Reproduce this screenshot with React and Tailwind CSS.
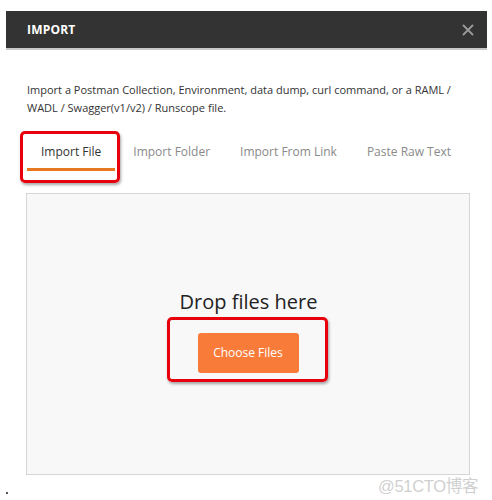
import React from "react";

export default function App() {
  const font = { fontFamily: '"Open Sans", "Noto Sans", sans-serif' };
  return (
    <div className="relative w-[492px] h-[500px] bg-white overflow-hidden" style={font}>
      <div className="ml-[6px] pt-[11px] w-[481px]">
        <div className="h-[39px] bg-[#333333] flex items-center justify-between pl-[21px] pr-[12px] border-b-[2px] border-[#c8c8c8]">
          <span className="text-white font-bold text-[12px] tracking-[0.2px]">IMPORT</span>
          <svg width="14" height="14" viewBox="0 0 14 14" className="text-[#9a9a9a]">
            <path d="M2 2 L12 12 M12 2 L2 12" stroke="currentColor" strokeWidth="1.8" />
          </svg>
        </div>
        <div className="pl-[21px] pr-[10px]">
          <p className="mt-[31px] text-[11px] leading-[18px] text-[#333]">
            Import a Postman Collection, Environment, data dump, curl command, or a RAML / WADL / Swagger(v1/v2) / Runscope file.
          </p>
          <div className="mt-[21px] flex items-end text-[12px] h-[33px]">
            <div className="relative">
              <div className="px-[14px] h-[33px] flex items-center text-[#333] border-b-[3px] border-[#e87722] pb-[2px]">Import File</div>
              <div className="absolute left-[-7px] right-[-5px] top-[-7px] bottom-[-12px] border-[3px] border-[#e8000d] rounded-[5px] shadow-[1px_2px_3px_rgba(0,0,0,0.35)]"></div>
            </div>
            <div className="ml-[18px] h-[33px] flex items-center text-[#8a8a8a] pb-[5px]">Import Folder</div>
            <div className="ml-[30px] h-[33px] flex items-center text-[#8a8a8a] pb-[5px]">Import From Link</div>
            <div className="ml-[30px] h-[33px] flex items-center text-[#8a8a8a] pb-[5px]">Paste Raw Text</div>
          </div>
          <div className="mt-[22px] ml-[-1px] w-[444px] h-[282px] bg-[#f8f8f9] border border-[#d6d6d6] flex flex-col items-center pt-[94px]">
            <div className="text-[20px] leading-[28px] text-[#222] pl-[1px]">Drop files here</div>
            <div className="relative mt-[17px]">
              <div className="w-[101px] h-[40px] bg-[#f97b3a] rounded-[3px] flex items-center justify-center text-white text-[12px]">Choose Files</div>
              <div className="absolute left-[-31px] right-[-29px] top-[-16px] bottom-[-9px] border-[3px] border-[#e8000d] rounded-[5px] shadow-[1px_2px_3px_rgba(0,0,0,0.35)]"></div>
            </div>
          </div>
        </div>
      </div>
      <div className="absolute left-[378px] top-[474px] text-[16.5px] text-[#d0d0d0] tracking-[-0.3px]" style={{ fontFamily: '"Liberation Sans", "Noto Sans CJK SC", sans-serif' }}>@51CTO博客</div>
      <div className="absolute left-[6px] top-[492px] w-[2px] h-[2px] bg-[#555]"></div>
    </div>
  );
}
